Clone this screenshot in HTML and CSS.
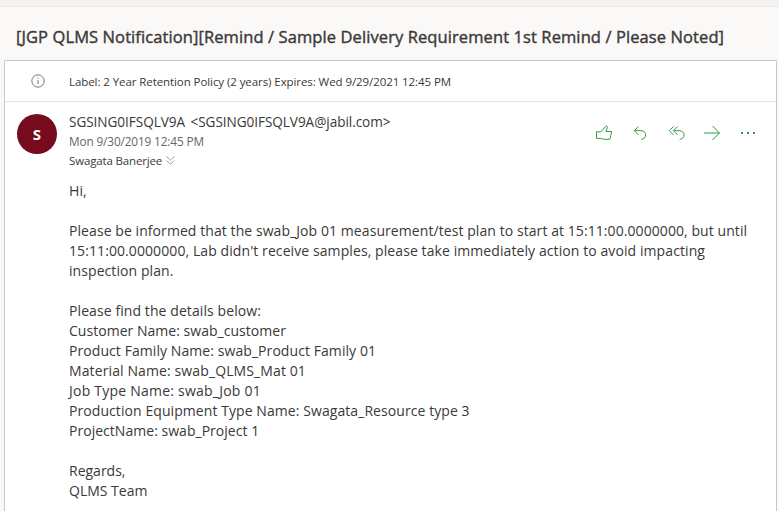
FILE: index.html
```html
<!DOCTYPE html>
<html lang="en">
<head>
<meta charset="utf-8">
<title>Mail</title>
<link rel="stylesheet" href="styles.css">
</head>
<body>
<div class="toolbar"></div>
<h1 class="subject">[JGP QLMS Notification][Remind / Sample Delivery Requirement 1st Remind / Please Noted]</h1>
<main class="card">
  <div class="retention">
    <svg class="info" viewBox="0 0 14 14" width="14" height="14"><circle cx="7" cy="7" r="6.2"/><path d="M7 6v4.3M7 3.5v1.2"/></svg>
    <span class="label">Label: 2 Year Retention Policy (2 years) Expires: Wed 9/29/2021 12:45 PM</span>
  </div>
  <header class="head">
    <div class="avatar">S</div>
    <div class="meta">
      <div class="from">SGSING0IFSQLV9A &lt;SGSING0IFSQLV9A@jabil.com&gt;</div>
      <div class="date">Mon 9/30/2019 12:45 PM</div>
      <div class="to">Swagata Banerjee<svg class="chev" viewBox="0 0 9 9" width="9" height="9"><path d="M.5.5l4 3.7 4-3.7M.5 4.5l4 3.7 4-3.7"/></svg></div>
    </div>
    <div class="actions">
      <svg viewBox="0 0 18 16" width="18" height="16"><path d="M1.5 6.8h4.3L10.5 1.6l1-.6q1.1.3.8 1.4L11 6.5h5.6l-.6 3-1.2 4.8H8.4L6.5 13.4h-5z"/></svg>
      <svg viewBox="0 0 14 16" width="14" height="16"><path d="M5.5 1.5L1.3 5.7l4.2 4.2M1.5 5.7h6.8a4.3 4.3 0 0 1 0 8.6"/></svg>
      <svg viewBox="0 0 18 16" width="18" height="16"><path d="M5.5 1.5L1.3 5.7l4.2 4.2M9.7 1.5L5.5 5.7l4.2 4.2M5.7 5.7h6a4.3 4.3 0 0 1 0 8.6"/></svg>
      <svg viewBox="0 0 18 16" width="18" height="16"><path d="M1 8h15.5M9.5 1l7 7-7 7"/></svg>
      <svg class="dots" viewBox="0 0 16 16" width="16" height="16"><path d="M1 7h2v2H1zM7 7h2v2H7zM13 7h2v2h-2z"/></svg>
    </div>
  </header>
  <article class="body">
    <p>Hi,</p>
    <p>Please be informed that the swab_Job 01 measurement/test plan to start at 15:11:00.0000000, but until<br>
    <span class="open">15:11:00.0000000, Lab didn't receive samples, please take immediately action to avoid impacting</span><br>
    inspection plan.</p>
    <p><span class="open">Please find the details below:</span><br>
    <span class="tight">Customer Name: swab_customer</span><br>
    Product Family Name: swab_Product Family 01<br>
    <span class="wide">Material Name: swab_QLMS_Mat 01</span><br>
    <span class="wider">Job Type Name: swab_Job 01</span><br>
    Production Equipment Type Name: Swagata_Resource type 3<br>
    <span class="tight">ProjectName: swab_Project 1</span></p>
    <p class="sign">Regards,<br>
    QLMS Team</p>
  </article>
</main>
</body>
</html>
```
FILE: styles.css
```css
* { box-sizing: border-box; }
body {
  margin: 0;
  height: 511px;
  overflow: hidden;
  display: flex;
  flex-direction: column;
  background: #faf9f8;
  color: #3a3938;
  font-family: "Open Sans", "Noto Sans", sans-serif;
}
.toolbar { flex: none; height: 7px; background: #f3f2f1; border-bottom: 1px solid #edebe9; }
.subject { flex: none; margin: 0; height: 53px; padding-left: 16px; font-size: 16.5px; font-weight: 400; -webkit-text-stroke: 0.4px #3a3938; letter-spacing: 0.094px; line-height: 60px; white-space: nowrap; }
.card { flex: 1; margin: 0 2px 0 4px; background: #fff; border: 1px solid #c8c8c8; border-bottom: 0; border-radius: 2px 2px 0 0; }
.retention { height: 41px; display: flex; align-items: center; border-bottom: 1px solid #e4e4e4; padding-left: 26px; font-size: 11.5px; letter-spacing: -0.077px; }
.info { margin-right: 24px; fill: none; stroke: #777; stroke-width: 1; }
.head { display: flex; padding: 10px 20px 0 12px; height: 79px; }
.avatar { width: 40px; height: 40px; margin: 2px 12px 0 0; border-radius: 50%; background: #750b1c; color: #fff; font-size: 15px; font-weight: 700; line-height: 40px; text-align: center; }
.meta { flex: 1; white-space: nowrap; }
.from { font-size: 13.6px; line-height: 20px; letter-spacing: -0.06px; word-spacing: 2px; }
.date { font-size: 11.8px; line-height: 19px; letter-spacing: -0.13px; color: #666; }
.to { font-size: 11.5px; line-height: 19px; letter-spacing: -0.15px; }
.chev { margin-left: 4px; fill: none; stroke: #999; stroke-width: .9; }
.actions { display: flex; padding-top: 13px; }
.actions svg { fill: none; stroke: #2f9e44; margin-right: 20px; }
.actions svg:nth-child(2) { margin-right: 21px; }
.actions svg:nth-child(3) { margin-right: 17px; }
.actions svg:nth-child(4) { margin-right: 19px; }
.actions .dots { fill: #2f9e44; stroke: none; margin-right: 0; }
.body { padding-left: 64px; font-size: 14px; line-height: 20px; letter-spacing: 0.073px; white-space: nowrap; }
.body p { margin: 0 0 20px; }
.open { letter-spacing: 0.087px; }
.tight { letter-spacing: 0.03px; }
.wide { letter-spacing: 0.113px; }
.wider { letter-spacing: 0.23px; }
.body .sign { letter-spacing: 0; }
```
